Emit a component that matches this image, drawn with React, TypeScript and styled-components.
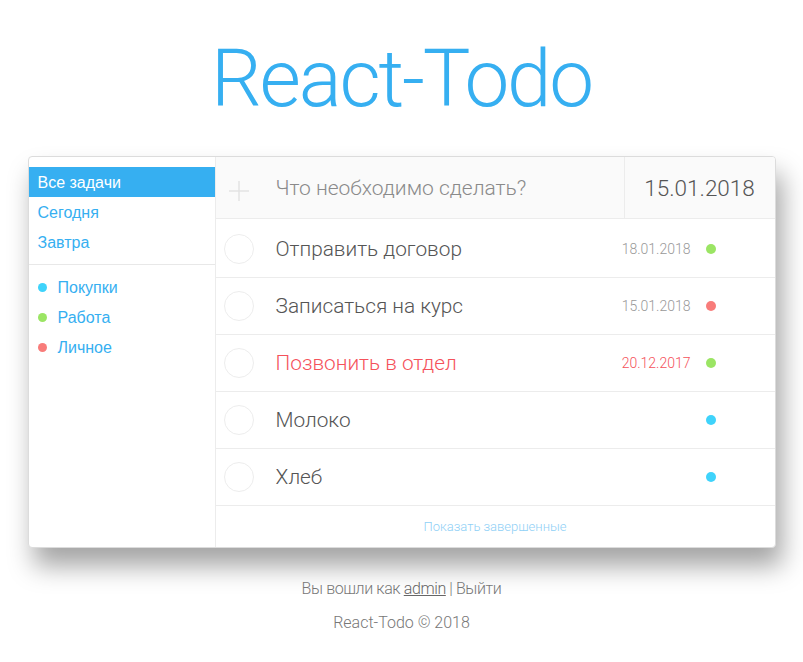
import React from "react";
import styled, { createGlobalStyle } from "styled-components";

const GlobalStyle = createGlobalStyle`
  html, body { margin: 0; padding: 0; background: #fff; }
  body { font-family: Roboto, "Liberation Sans", sans-serif; -webkit-font-smoothing: antialiased; }
  * { box-sizing: border-box; }
`;

const Page = styled.div`
  width: 748px;
  margin: 0 auto;
`;

const Title = styled.h1`
  margin: 0;
  height: 156px;
  padding-top: 31px;
  text-align: center;
  font-family: Roboto, sans-serif;
  font-weight: 300;
  font-size: 80px;
  letter-spacing: -2.2px;
  line-height: 96px;
  color: #36aff1;
`;

const Card = styled.div`
  display: flex;
  height: 392px;
  background: #fff;
  border: 1px solid #dcdcdc;
  border-radius: 4px;
  box-shadow: 6px 18px 26px rgba(0, 0, 0, 0.36);
  overflow: hidden;
`;

const Sidebar = styled.aside`
  width: 187px;
  flex-shrink: 0;
  border-right: 1px solid #ececec;
  padding-top: 10px;
`;

const NavGroup = styled.ul`
  list-style: none;
  margin: 0;
  padding: 0;
`;

const NavItem = styled.li<{ $active?: boolean }>`
  height: 30px;
  display: flex;
  align-items: center;
  gap: 11px;
  padding-left: 9px;
  padding-top: 1px;
  font-family: "Liberation Sans", Arial, sans-serif;
  font-size: 16px;
  color: ${(p) => (p.$active ? "#fff" : "#36aff1")};
  background: ${(p) => (p.$active ? "#36aff1" : "transparent")};
`;

const Divider = styled.hr`
  border: 0;
  border-top: 1px solid #e8e8e8;
  margin: 7px 0 7px;
`;

const Dot = styled.span<{ $color: string }>`
  display: inline-block;
  width: 9px;
  height: 9px;
  border-radius: 50%;
  background: ${(p) => p.$color};
  flex-shrink: 0;
`;

const Main = styled.section`
  flex: 1;
  display: flex;
  flex-direction: column;
`;

const Header = styled.div`
  height: 62px;
  display: flex;
  background: #fafafa;
  border-bottom: 1px solid #ececec;
  margin-bottom: 2px;
`;

const PlusBox = styled.div`
  width: 46px;
  display: flex;
  align-items: center;
  justify-content: center;
  padding-top: 6px;
`;

const NewInput = styled.div`
  flex: 1;
  display: flex;
  align-items: center;
  margin-left: 14px;
  font-weight: 300;
  font-size: 21px;
  color: #8a8a8a;
`;

const HeaderDate = styled.div`
  width: 151px;
  border-left: 1px solid #ececec;
  display: flex;
  align-items: center;
  justify-content: center;
  font-weight: 300;
  font-size: 22.5px;
  color: #555;
`;

const List = styled.ul`
  list-style: none;
  margin: 0;
  padding: 0;
`;

const Row = styled.li`
  height: 57px;
  display: flex;
  align-items: center;
  border-bottom: 1px solid #ececec;
  padding-left: 8px;
  padding-right: 59px;
`;

const Check = styled.span`
  width: 30px;
  height: 30px;
  border-radius: 50%;
  border: 1px solid #ededed;
  flex-shrink: 0;
  margin-right: 22px;
`;

const RowText = styled.span<{ $overdue?: boolean }>`
  flex: 1;
  font-weight: 300;
  font-size: 20.8px;
  color: ${(p) => (p.$overdue ? "#f5525b" : "#555")};
`;

const RowDate = styled.span<{ $overdue?: boolean }>`
  font-weight: 300;
  font-size: 14px;
  color: ${(p) => (p.$overdue ? "#f5525b" : "#999")};
  margin-right: 15px;
`;

const RowDot = styled.span<{ $color: string }>`
  width: 10px;
  height: 10px;
  border-radius: 50%;
  background: ${(p) => p.$color};
  flex-shrink: 0;
`;

const ShowDone = styled.div`
  flex: 1;
  display: flex;
  align-items: center;
  justify-content: center;
  font-weight: 300;
  font-size: 13px;
  color: #8fd0f6;
`;

const Footer = styled.footer`
  padding-top: 30px;
  text-align: center;
  font-weight: 300;
  font-size: 16px;
  color: #777;
`;

const FooterLine = styled.p<{ $tight?: boolean }>`
  margin: 0;
  height: 34px;
  line-height: 22px;
  letter-spacing: ${(p) => (p.$tight ? "-0.4px" : "0")};
`;

const UserLink = styled.a`
  color: #666;
  text-decoration: underline;
`;

const GREEN = "#9be564";
const RED = "#f87c7a";
const BLUE = "#3fd3fb";

const todos = [
  { text: "Отправить договор", date: "18.01.2018", color: GREEN },
  { text: "Записаться на курс", date: "15.01.2018", color: RED },
  { text: "Позвонить в отдел", date: "20.12.2017", color: GREEN, overdue: true },
  { text: "Молоко", date: "", color: BLUE },
  { text: "Хлеб", date: "", color: BLUE },
];

export default function App() {
  return (
    <>
      <GlobalStyle />
      <Page>
        <Title>React-Todo</Title>
        <Card>
          <Sidebar>
            <NavGroup>
              <NavItem $active>Все задачи</NavItem>
              <NavItem>Сегодня</NavItem>
              <NavItem>Завтра</NavItem>
            </NavGroup>
            <Divider />
            <NavGroup>
              <NavItem><Dot $color={BLUE} />Покупки</NavItem>
              <NavItem><Dot $color={GREEN} />Работа</NavItem>
              <NavItem><Dot $color={RED} />Личное</NavItem>
            </NavGroup>
          </Sidebar>
          <Main>
            <Header>
              <PlusBox>
                <svg width="20" height="20" viewBox="0 0 20 20">
                  <path d="M10 0V20M0 10H20" stroke="#e3e3e3" strokeWidth="1.5" fill="none" />
                </svg>
              </PlusBox>
              <NewInput>Что необходимо сделать?</NewInput>
              <HeaderDate>15.01.2018</HeaderDate>
            </Header>
            <List>
              {todos.map((t) => (
                <Row key={t.text}>
                  <Check />
                  <RowText $overdue={t.overdue}>{t.text}</RowText>
                  {t.date && <RowDate $overdue={t.overdue}>{t.date}</RowDate>}
                  <RowDot $color={t.color} />
                </Row>
              ))}
            </List>
            <ShowDone>Показать завершенные</ShowDone>
          </Main>
        </Card>
        <Footer>
          <FooterLine $tight>
            Вы вошли как <UserLink>admin</UserLink> | Выйти
          </FooterLine>
          <FooterLine>React-Todo © 2018</FooterLine>
        </Footer>
      </Page>
    </>
  );
}
